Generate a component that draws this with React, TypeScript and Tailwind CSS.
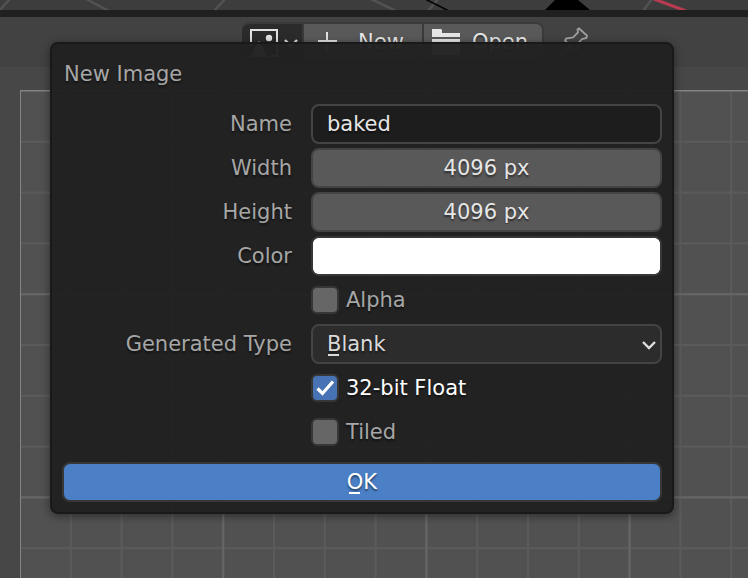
import { useId, useState } from "react";
import type { ReactNode } from "react";

const textShadow = "[text-shadow:0_2px_2px_rgba(0,0,0,0.5)]";
const fieldBase = "block h-10 w-full rounded-lg border-2 outline-none";

function ViewportEdge() {
  return (
    <svg className="block h-2.5 w-full bg-[#3d3d3d]" aria-hidden="true">
      <g stroke="#525252" strokeWidth="2.5">
        <path d="M-1 11 10 -1M86 -1 109 11M214 11 225 -1M371 -1 396 11M428 11 438 -1M643 11 652 -1" />
      </g>
      <path d="M425 -1 449 11" stroke="#000" strokeWidth="1.5" />
      <path d="M545 10 555 0H578L590 10Z" fill="#000" />
      <path d="M654 -1 686 11" stroke="#b83b50" strokeWidth="3" />
    </svg>
  );
}

function ImageIcon() {
  return (
    <svg width="28" height="28" viewBox="0 0 28 28" aria-hidden="true">
      <path d="M1 17V1H27V27H20" fill="none" stroke="#e2e2e2" strokeWidth="2" />
      <circle cx="19" cy="9" r="3.2" fill="#e2e2e2" />
      <path d="M0 28 9 12 18 28Z" fill="#e2e2e2" />
    </svg>
  );
}

function Chevron({ className = "" }: { className?: string }) {
  return (
    <svg className={className} width="14" height="9" viewBox="0 0 14 9" aria-hidden="true">
      <path d="M1 1 7 7 13 1" fill="none" stroke="#dedede" strokeWidth="2.4" />
    </svg>
  );
}

function PinIcon() {
  return (
    <svg width="30" height="30" viewBox="0 0 30 30" fill="none" stroke="#a0a0a0" strokeWidth="1.8" aria-hidden="true">
      <path d="M17.5 2.5 19 1.5 27 8.5 26.5 11 22 12 18.5 16 17.5 22.5 15 23.5 5 13.5 6 11.5 13 10.5 18 5.5Z" />
      <path d="M10 19 2 27" />
    </svg>
  );
}

function HeaderBar() {
  return (
    <header className="flex h-[50px] items-start bg-[#424242] pt-[5px] pl-[242px] text-[#e6e6e6]">
      <button type="button" aria-label="Browse image" className="flex h-10 w-[60px] items-center gap-1.5 rounded-l-lg border-t-2 border-[#3a3a3a] bg-[#2b2b2b] pl-2">
        <ImageIcon />
        <Chevron />
      </button>
      <button type="button" className={`flex h-10 w-[122px] items-center gap-5 border-2 border-[#3a3a3a] bg-[#595959] pl-3.5 ${textShadow}`}>
        <svg width="20" height="20" viewBox="0 0 20 20" aria-hidden="true">
          <path d="M0 9H19M9 0V19" stroke="#e2e2e2" strokeWidth="2" />
        </svg>
        New
      </button>
      <button type="button" className={`flex h-10 w-[120px] items-center gap-3 rounded-r-lg border-2 border-l-0 border-[#3a3a3a] bg-[#595959] pl-2 ${textShadow}`}>
        <svg width="28" height="26" viewBox="0 0 28 26" fill="#e6e6e6" aria-hidden="true">
          <path d="M0 0H9L10 1V4H28V8H0ZM0 10H28V26H0Z" />
        </svg>
        Open
      </button>
      <button type="button" aria-label="Pin" className="ml-4 flex h-10 items-center">
        <PinIcon />
      </button>
    </header>
  );
}

function ImageCanvas() {
  return (
    <main className="flex flex-1 bg-[#474747] pt-[23px] pl-5">
      <svg className="flex-1" aria-hidden="true">
        <defs>
          <pattern id="minor" x="-1" width="50.8" height="50.8" patternUnits="userSpaceOnUse">
            <path d="M0 1H51M1 0V51" stroke="#5b5b5b" strokeWidth="2" />
          </pattern>
          <pattern id="major" x="-1" width="203.2" height="203.2" patternUnits="userSpaceOnUse">
            <path d="M0 1H204M1 0V204" stroke="#666" strokeWidth="2" />
          </pattern>
        </defs>
        <rect width="100%" height="100%" fill="#515151" />
        <rect width="100%" height="100%" fill="url(#minor)" />
        <rect width="100%" height="100%" fill="url(#major)" />
        <rect width="100%" height="1" fill="#858585" />
        <rect width="1" height="100%" fill="#858585" />
      </svg>
    </main>
  );
}

function Row({ label, htmlFor, children }: { label?: string; htmlFor?: string; children: ReactNode }) {
  return (
    <div className="grid min-h-10 grid-cols-[230px_1fr] items-center gap-[19px]">
      {label ? (
        <label htmlFor={htmlFor} className={`text-right text-[#a6a6a6] ${textShadow}`}>
          {label}
        </label>
      ) : (
        <span />
      )}
      {children}
    </div>
  );
}

function NumberRow({ label, initial }: { label: string; initial: string }) {
  const id = useId();
  const [value, setValue] = useState(initial);
  return (
    <Row label={label} htmlFor={id}>
      <input
        id={id}
        value={value}
        onChange={(e) => setValue(e.target.value)}
        className={`${fieldBase} border-[#444] bg-[#595959] text-center text-[#e6e6e6] ${textShadow}`}
      />
    </Row>
  );
}

function CheckRow({ label, initial = false }: { label: string; initial?: boolean }) {
  const [checked, setChecked] = useState(initial);
  return (
    <Row>
      <label className={`relative flex items-center gap-[7px] text-[#a6a6a6] has-checked:text-white ${textShadow}`}>
        <input
          type="checkbox"
          checked={checked}
          onChange={(e) => setChecked(e.target.checked)}
          className="peer size-7 appearance-none rounded-md border-2 border-[#373737] bg-[#666] checked:bg-[#4772b3]"
        />
        <svg className="absolute left-0 hidden peer-checked:block" width="28" height="28" viewBox="0 0 28 28" aria-hidden="true">
          <path d="M6.5 14.5 11.5 19.5 22 7.5" fill="none" stroke="#fff" strokeWidth="3.2" />
        </svg>
        {label}
      </label>
    </Row>
  );
}

function NewImageDialog() {
  const nameId = useId();
  const colorId = useId();
  const typeId = useId();
  const [name, setName] = useState("baked");
  const [color, setColor] = useState("#ffffff");
  return (
    <form
      role="dialog"
      aria-label="New Image"
      onSubmit={(e) => e.preventDefault()}
      className="absolute top-[42px] left-[50px] flex w-[624px] flex-col gap-1 rounded-lg border-2 border-[#191919] bg-[#212121]/97 p-2.5 shadow-[0_2px_8px_rgba(0,0,0,0.45)]"
    >
      <h1 className={`mb-1.5 pl-0.5 leading-10 text-[#a6a6a6] ${textShadow}`}>New Image</h1>
      <Row label="Name" htmlFor={nameId}>
        <input
          id={nameId}
          value={name}
          onChange={(e) => setName(e.target.value)}
          className={`${fieldBase} border-[#444] bg-[#1d1d1d] px-3.5 text-[#e6e6e6] ${textShadow}`}
        />
      </Row>
      <NumberRow label="Width" initial="4096 px" />
      <NumberRow label="Height" initial="4096 px" />
      <Row label="Color" htmlFor={colorId}>
        <input
          id={colorId}
          type="color"
          value={color}
          onChange={(e) => setColor(e.target.value)}
          className={`${fieldBase} appearance-none border-[#373737] bg-white p-0 [&::-webkit-color-swatch]:border-0 [&::-webkit-color-swatch]:rounded-md [&::-webkit-color-swatch-wrapper]:p-0`}
        />
      </Row>
      <CheckRow label="Alpha" />
      <Row label="Generated Type" htmlFor={typeId}>
        <div className="relative">
          <select id={typeId} className={`${fieldBase} appearance-none border-[#444] bg-[#2c2c2c] px-3.5 text-[#d9d9d9] ${textShadow}`}>
            <option>Blank</option>
          </select>
          <span className="absolute bottom-2 left-[17px] h-0.5 w-[11px] bg-[#d9d9d9]" />
          <Chevron className="pointer-events-none absolute top-[17px] right-1.5" />
        </div>
      </Row>
      <CheckRow label="32-bit Float" initial />
      <CheckRow label="Tiled" />
      <button type="submit" className={`mt-1.5 h-10 rounded-lg border-2 border-[#373737] bg-[#4b7fc6] text-white ${textShadow}`}>
        <span className="relative">
          OK
          <span className="absolute bottom-0 left-0.5 h-0.5 w-[11px] bg-white" />
        </span>
      </button>
    </form>
  );
}

export default function App() {
  return (
    <div className="relative flex min-h-screen flex-col overflow-hidden bg-[#474747] font-['DejaVu_Sans',sans-serif] text-[21px] leading-7">
      <ViewportEdge />
      <div className="h-[7px] bg-[#202020]" />
      <HeaderBar />
      <ImageCanvas />
      <NewImageDialog />
    </div>
  );
}
